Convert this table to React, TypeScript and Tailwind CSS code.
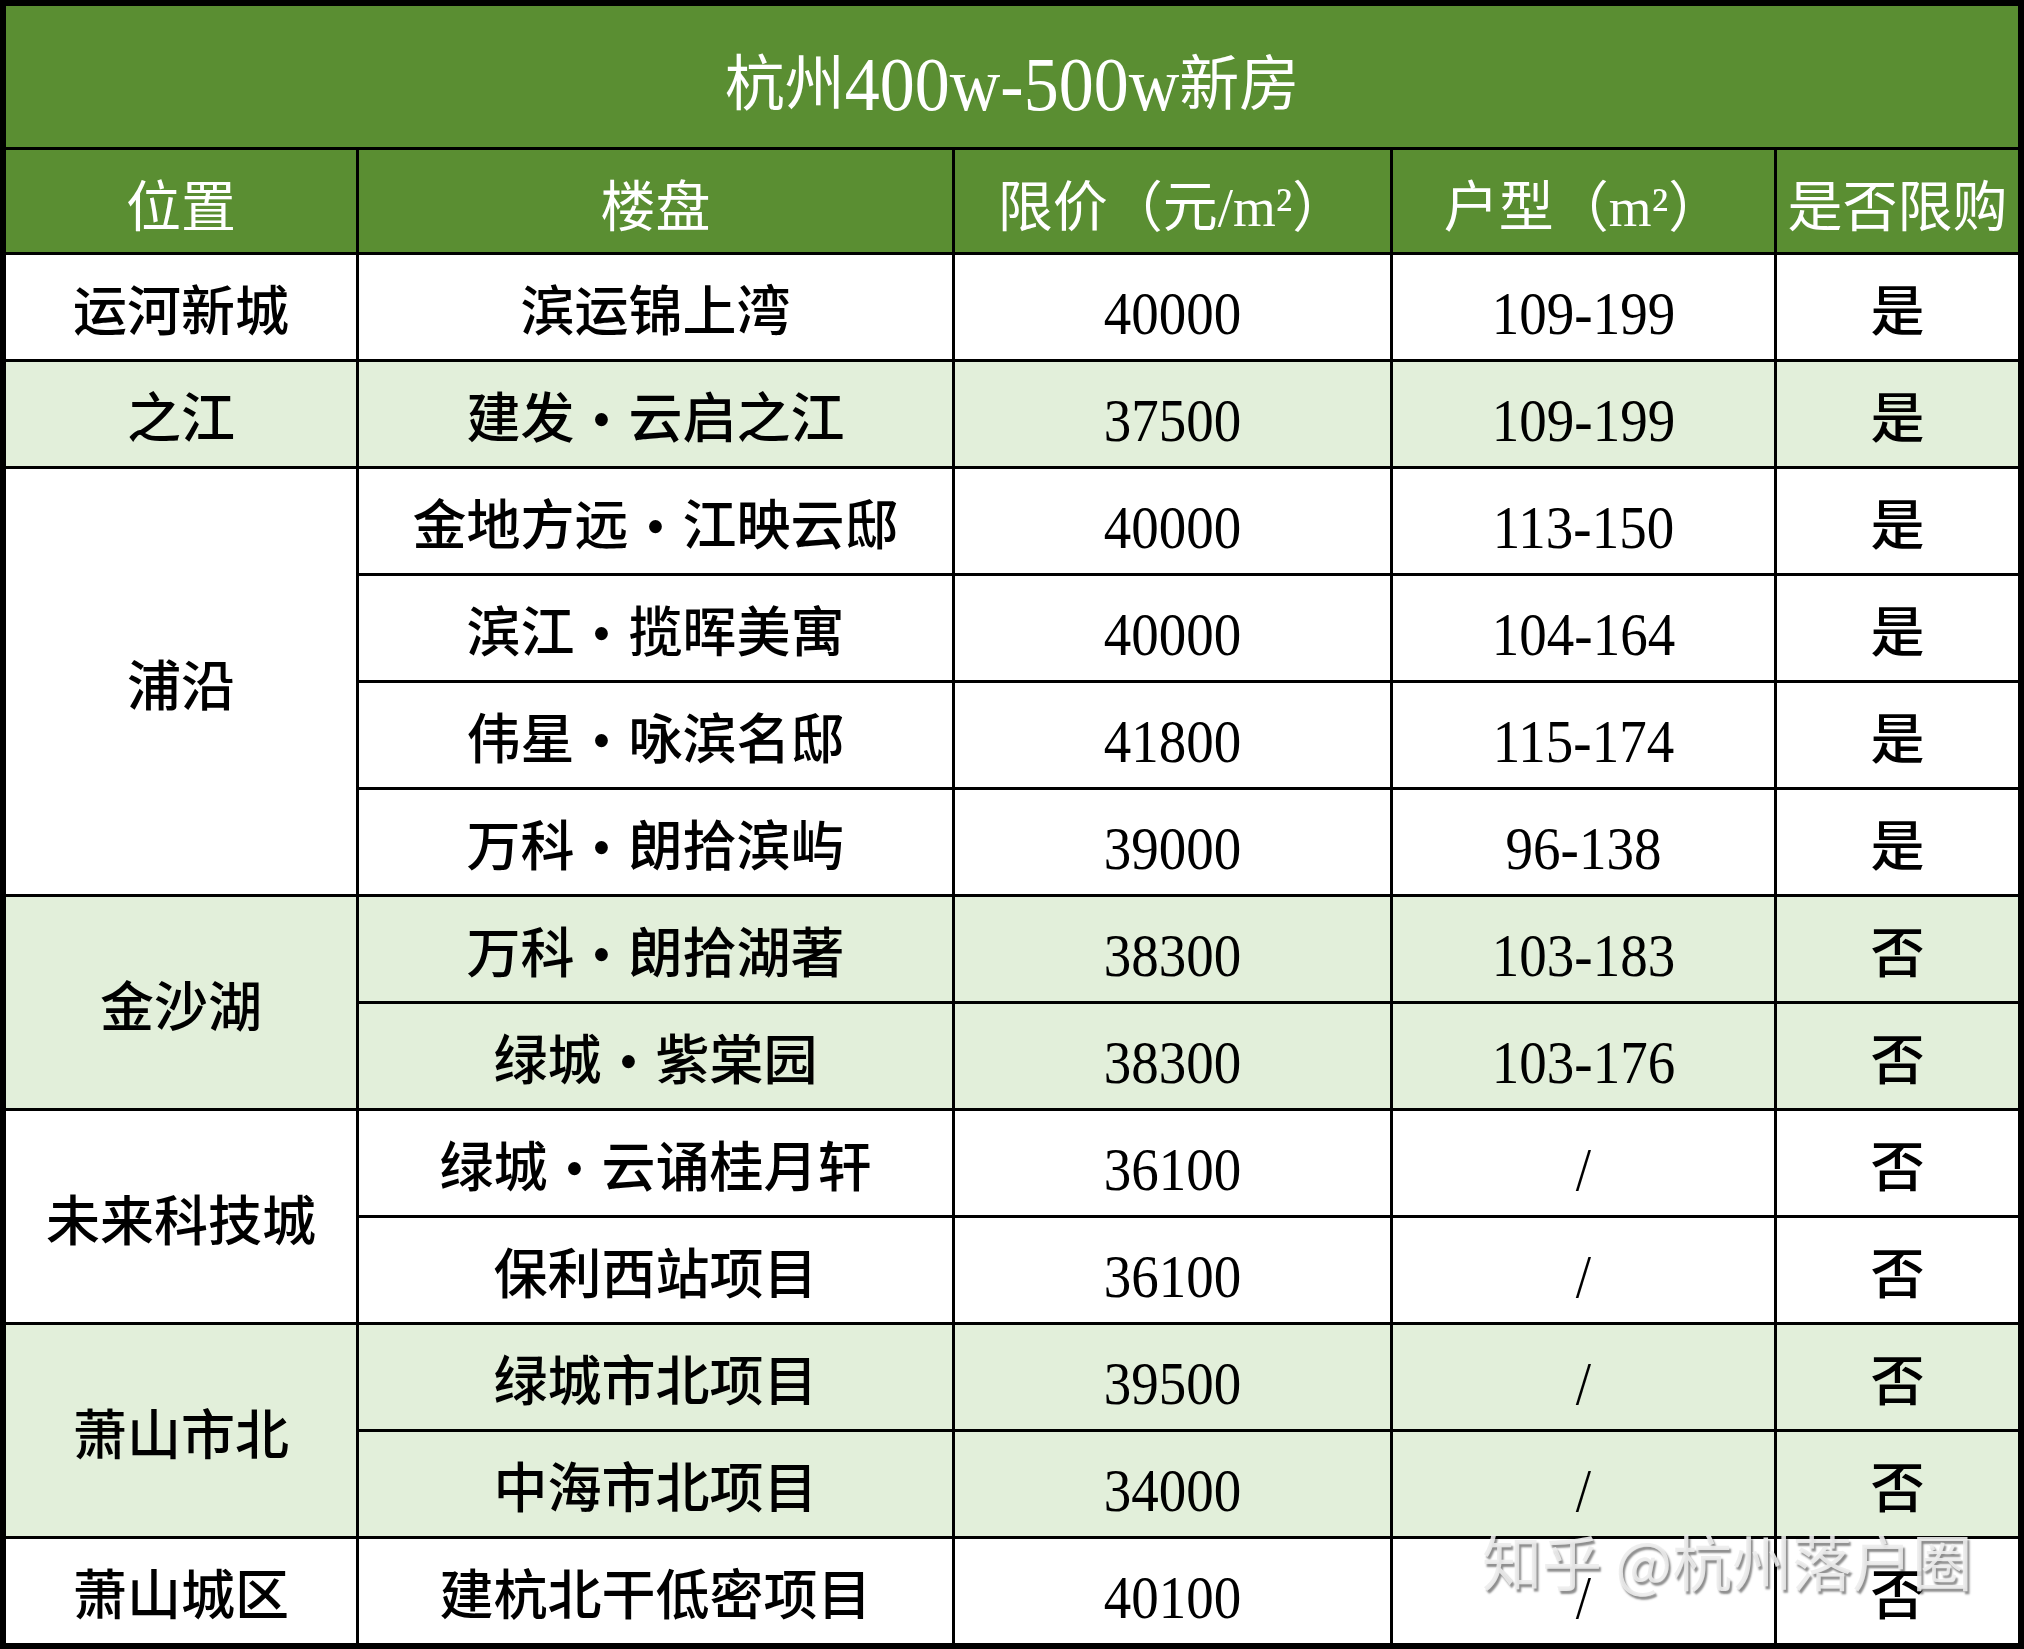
type Item = {
  name: string;
  price: string;
  size: string;
  limit: string;
};

type Group = {
  loc: string;
  shaded: boolean;
  items: Item[];
};

const groups: Group[] = [
  {
    loc: "运河新城",
    shaded: false,
    items: [{ name: "滨运锦上湾", price: "40000", size: "109-199", limit: "是" }],
  },
  {
    loc: "之江",
    shaded: true,
    items: [{ name: "建发·云启之江", price: "37500", size: "109-199", limit: "是" }],
  },
  {
    loc: "浦沿",
    shaded: false,
    items: [
      { name: "金地方远·江映云邸", price: "40000", size: "113-150", limit: "是" },
      { name: "滨江·揽晖美寓", price: "40000", size: "104-164", limit: "是" },
      { name: "伟星·咏滨名邸", price: "41800", size: "115-174", limit: "是" },
      { name: "万科·朗拾滨屿", price: "39000", size: "96-138", limit: "是" },
    ],
  },
  {
    loc: "金沙湖",
    shaded: true,
    items: [
      { name: "万科·朗拾湖著", price: "38300", size: "103-183", limit: "否" },
      { name: "绿城·紫棠园", price: "38300", size: "103-176", limit: "否" },
    ],
  },
  {
    loc: "未来科技城",
    shaded: false,
    items: [
      { name: "绿城·云诵桂月轩", price: "36100", size: "/", limit: "否" },
      { name: "保利西站项目", price: "36100", size: "/", limit: "否" },
    ],
  },
  {
    loc: "萧山市北",
    shaded: true,
    items: [
      { name: "绿城市北项目", price: "39500", size: "/", limit: "否" },
      { name: "中海市北项目", price: "34000", size: "/", limit: "否" },
    ],
  },
  {
    loc: "萧山城区",
    shaded: false,
    items: [{ name: "建杭北干低密项目", price: "40100", size: "/", limit: "否" }],
  },
];

const spanClass: Record<number, string> = {
  1: "row-span-1",
  2: "row-span-2",
  4: "row-span-4",
};

// names use a full-width dot between developer and project
function Name({ text }: { text: string }) {
  const parts = text.split("·");
  if (parts.length === 1) return <>{text}</>;
  return (
    <>
      {parts[0]}
      <span className="inline-block w-[1em] text-center">•</span>
      {parts[1]}
    </>
  );
}

function Cell({ shaded, children }: { shaded: boolean; children: React.ReactNode }) {
  return (
    <div
      className={`flex items-center justify-center pt-3 text-[54px] leading-none font-medium text-black ${
        shaded ? "bg-[#e2efda]" : "bg-white"
      }`}
    >
      {children}
    </div>
  );
}

// digits in the sheet are tall and narrow
function Num({ v }: { v: string }) {
  return <span className="inline-block scale-y-[1.12] text-[55px] font-normal">{v}</span>;
}

export default function App() {
  return (
    <div className="relative h-[1649px] w-[2024px] bg-black font-['Liberation_Serif','Noto_Sans_CJK_SC',serif]">
      <div className="grid h-full w-full grid-cols-[350px_593px_435px_381px_241px] grid-rows-[141px_102px_repeat(13,104px)] gap-[3px] border-[6px] border-black">
        {/* Title */}
        <div className="col-span-5 flex items-center justify-center bg-[#5a8e32] pt-4 text-[60px] leading-none text-white">
          杭州<span className="inline-block scale-y-[1.08] text-[70px]">400w-500w</span>新房
        </div>

        {/* Header */}
        {["位置", "楼盘", "限价（元/m²）", "户型（m²）", "是否限购"].map((h) => (
          <div
            key={h}
            className="flex items-center justify-center bg-[#5a8e32] pt-3 text-[55px] leading-none whitespace-nowrap text-white"
          >
            {h}
          </div>
        ))}

        {/* Rows */}
        {groups.map((g) => (
          <>
            <div
              key={g.loc}
              className={`col-start-1 ${spanClass[g.items.length]} flex items-center justify-center pt-3 text-[54px] leading-none font-medium text-black ${
                g.shaded ? "bg-[#e2efda]" : "bg-white"
              }`}
            >
              {g.loc}
            </div>
            {g.items.map((it) => (
              <>
                <Cell key={it.name} shaded={g.shaded}>
                  <Name text={it.name} />
                </Cell>
                <Cell shaded={g.shaded}>
                  <Num v={it.price} />
                </Cell>
                <Cell shaded={g.shaded}>
                  <Num v={it.size} />
                </Cell>
                <Cell shaded={g.shaded}>{it.limit}</Cell>
              </>
            ))}
          </>
        ))}
      </div>

      {/* Watermark */}
      <div className="absolute top-[1530px] left-[1482px] font-['Noto_Sans_CJK_SC',sans-serif] text-[60px] leading-none whitespace-nowrap text-[#ececec]/90 [text-shadow:2px_3px_2px_rgba(0,0,0,0.45)]">
        知乎 @杭州落户圈
      </div>
    </div>
  );
}
